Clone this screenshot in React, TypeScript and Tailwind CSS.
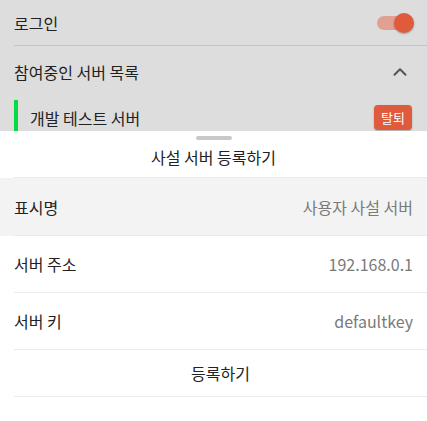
import { ChevronUp } from 'lucide-react';

const font = { fontFamily: '"Noto Sans CJK KR", "Noto Sans", sans-serif' };

function FormRow({ label, value, shaded, tall }: { label: string; value: string; shaded?: boolean; tall?: boolean }) {
    return (
        <div className={`pl-[14px] ${shaded ? 'bg-[#f3f3f3]' : ''}`}>
            <div className={`flex ${tall ? 'h-[58px]' : 'h-[57px]'} items-center justify-between border-b border-[#ebebeb] pr-[14px]`}>
                <span className="text-[16px] text-[#222]">{label}</span>
                <span className="text-[16px] text-[#7a7a7a]">{value}</span>
            </div>
        </div>
    );
}

export default function App() {
    return (
        <div className="h-[421px] w-[427px] overflow-hidden bg-white" style={font}>
            {/* settings behind the sheet */}
            <div className="h-[131px] overflow-hidden bg-[#dddddd]">
                <div className="pl-[14px]">
                    <div className="flex h-[46px] items-center justify-between border-b border-[#c4c4c4] pr-[13px]">
                        <span className="pt-[1px] text-[16px] text-[#222]">로그인</span>
                        <div className="relative h-[20px] w-[37px]">
                            <div className="absolute left-0 top-[3px] h-[14px] w-[34px] rounded-full bg-[#e0a192]" />
                            <div className="absolute right-0 top-0 h-[20px] w-[20px] rounded-full bg-[#e05a3c] shadow-[0_1px_2px_rgba(0,0,0,0.3)]" />
                        </div>
                    </div>
                    <div className="flex h-[52px] items-center justify-between pr-[16px]">
                        <span className="text-[16px] text-[#222]">참여중인 서버 목록</span>
                        <ChevronUp size={22} strokeWidth={2.2} className="text-[#555]" />
                    </div>
                    <div className="mt-[2px] flex h-[35px] items-center justify-between border-l-4 border-[#00dd44] pl-[12px] pr-[15px]">
                        <span className="text-[16px] text-[#222]">개발 테스트 서버</span>
                        <span className="flex h-[25px] w-[38px] items-center justify-center rounded-[4px] bg-[#e05a3c] text-[13px] text-white shadow-[0_1px_2px_rgba(0,0,0,0.25)]">
                            탈퇴
                        </span>
                    </div>
                </div>
            </div>

            {/* bottom sheet */}
            <div className="bg-white">
                <div className="flex justify-center pt-[5px]">
                    <div className="h-[4px] w-[36px] rounded-full bg-[#c8c8c8]" />
                </div>
                <div className="flex h-[37px] items-center justify-center pb-[3px] text-[16px] text-[#222]">
                    사설 서버 등록하기
                </div>
                <div className="pl-[14px]">
                    <div className="border-b border-[#ebebeb]" />
                </div>
                <FormRow label="표시명" value="사용자 사설 서버" shaded tall />
                <FormRow label="서버 주소" value="192.168.0.1" />
                <FormRow label="서버 키" value="defaultkey" />
                <div className="pl-[14px]">
                    <div className="flex h-[47px] items-center justify-center border-b border-[#ebebeb] text-[16px] text-[#222]">
                        등록하기
                    </div>
                </div>
            </div>
        </div>
    );
}
